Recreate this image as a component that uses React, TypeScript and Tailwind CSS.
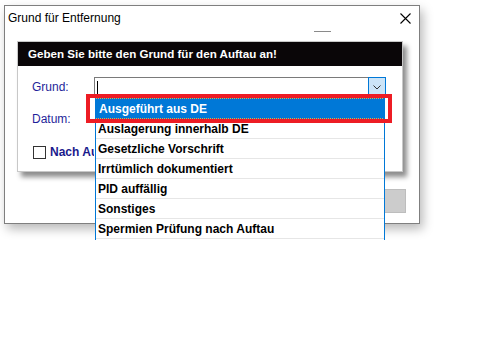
import React from 'react'

const reasons = [
  'Ausgeführt aus DE',
  'Auslagerung innerhalb DE',
  'Gesetzliche Vorschrift',
  'Irrtümlich dokumentiert',
  'PID auffällig',
  'Sonstiges',
  'Spermien Prüfung nach Auftau',
]

export default function App() {
  return (
    <div
      className="relative w-[494px] h-[360px] bg-white overflow-hidden text-[12px] text-black"
      style={{ fontFamily: '"Liberation Sans", Arial, sans-serif' }}
    >
      {/* Outer window */}
      <div className="absolute left-[4px] top-[5px] w-[416px] h-[219px] bg-white border border-[#7f7f7f] shadow-[3px_5px_10px_rgba(0,0,0,0.28)]">
        <div className="flex items-center justify-between h-[24px] pl-[3px] pr-[8px]">
          <span>Grund für Entfernung</span>
          <svg width="11" height="11" viewBox="0 0 11 11" className="mt-[1px]">
            <path d="M0.5 0.5 L10.5 10.5 M10.5 0.5 L0.5 10.5" stroke="#000" strokeWidth="1.1" />
          </svg>
        </div>
        <div className="absolute left-[309px] top-[25px] w-[17px] h-[1px] bg-[#8a8a8a]" />

        {/* greyed button partly covered by list */}
        <div className="absolute left-[320px] top-[183px] w-[81px] h-[24px] bg-[#cccccc] border border-[#bdbdbd]" />

        {/* Inner dialog */}
        <div className="absolute left-[12px] top-[35px] w-[386px] h-[131px] bg-white border border-[#c8c8c8] shadow-[4px_5px_5px_rgba(0,0,0,0.45)]">
          <div className="h-[24px] bg-[#0a0608] text-white font-bold text-[11.6px] flex items-center pl-[10px]">
            Geben Sie bitte den Grund für den Auftau an!
          </div>
          <div className="flex items-center mt-[11px] pl-[14px]">
            <span className="w-[62px] text-[#1f1f9a]">Grund:</span>
            <div className="flex w-[292px] h-[20px] border border-[#7a7a7a] bg-white">
              <div className="flex-1 flex items-center pl-[2px]">
                <div className="w-[1px] h-[13px] bg-black" />
              </div>
              <div className="w-[18px] -my-[1px] -mr-[1px] bg-[#cce4f7] border border-[#0078d7] flex items-center justify-center">
                <svg width="8" height="5" viewBox="0 0 8 5">
                  <path d="M0.5 0.5 L4 4 L7.5 0.5" fill="none" stroke="#333" strokeWidth="1" />
                </svg>
              </div>
            </div>
          </div>
          <div className="mt-[13px] pl-[14px] text-[#1f1f9a]">Datum:</div>
          <div className="flex items-center mt-[15px] pl-[15px] gap-[4px]">
            <div className="w-[13px] h-[13px] border border-[#333] bg-white" />
            {/* label runs under the open list */}
            <span className="w-[44px] overflow-hidden whitespace-nowrap font-bold text-[#1a1a8c]">
              Nach Auftau entfernt
            </span>
          </div>
        </div>
      </div>

      {/* Dropdown list */}
      <div className="absolute left-[95px] top-[96px] w-[290px] h-[144px] overflow-hidden bg-white border-x border-[#0078d7] pt-[2px] font-bold">
        {reasons.map((r, i) => (
          <div
            key={r}
            className={
              i === 0
                ? 'h-[21px] mx-[-1px] pl-[3px] flex items-center bg-[#0078d7] text-white border border-dotted border-[#f0a040]'
                : 'h-[20px] pl-[2px] flex items-center border-b border-[#e6e6e6]'
            }
          >
            {r}
          </div>
        ))}
      </div>

      {/* Red highlight frame */}
      <div className="absolute left-[86px] top-[94px] w-[306px] h-[29px] border-[4px] border-[#ed1c24]" />
    </div>
  )
}
